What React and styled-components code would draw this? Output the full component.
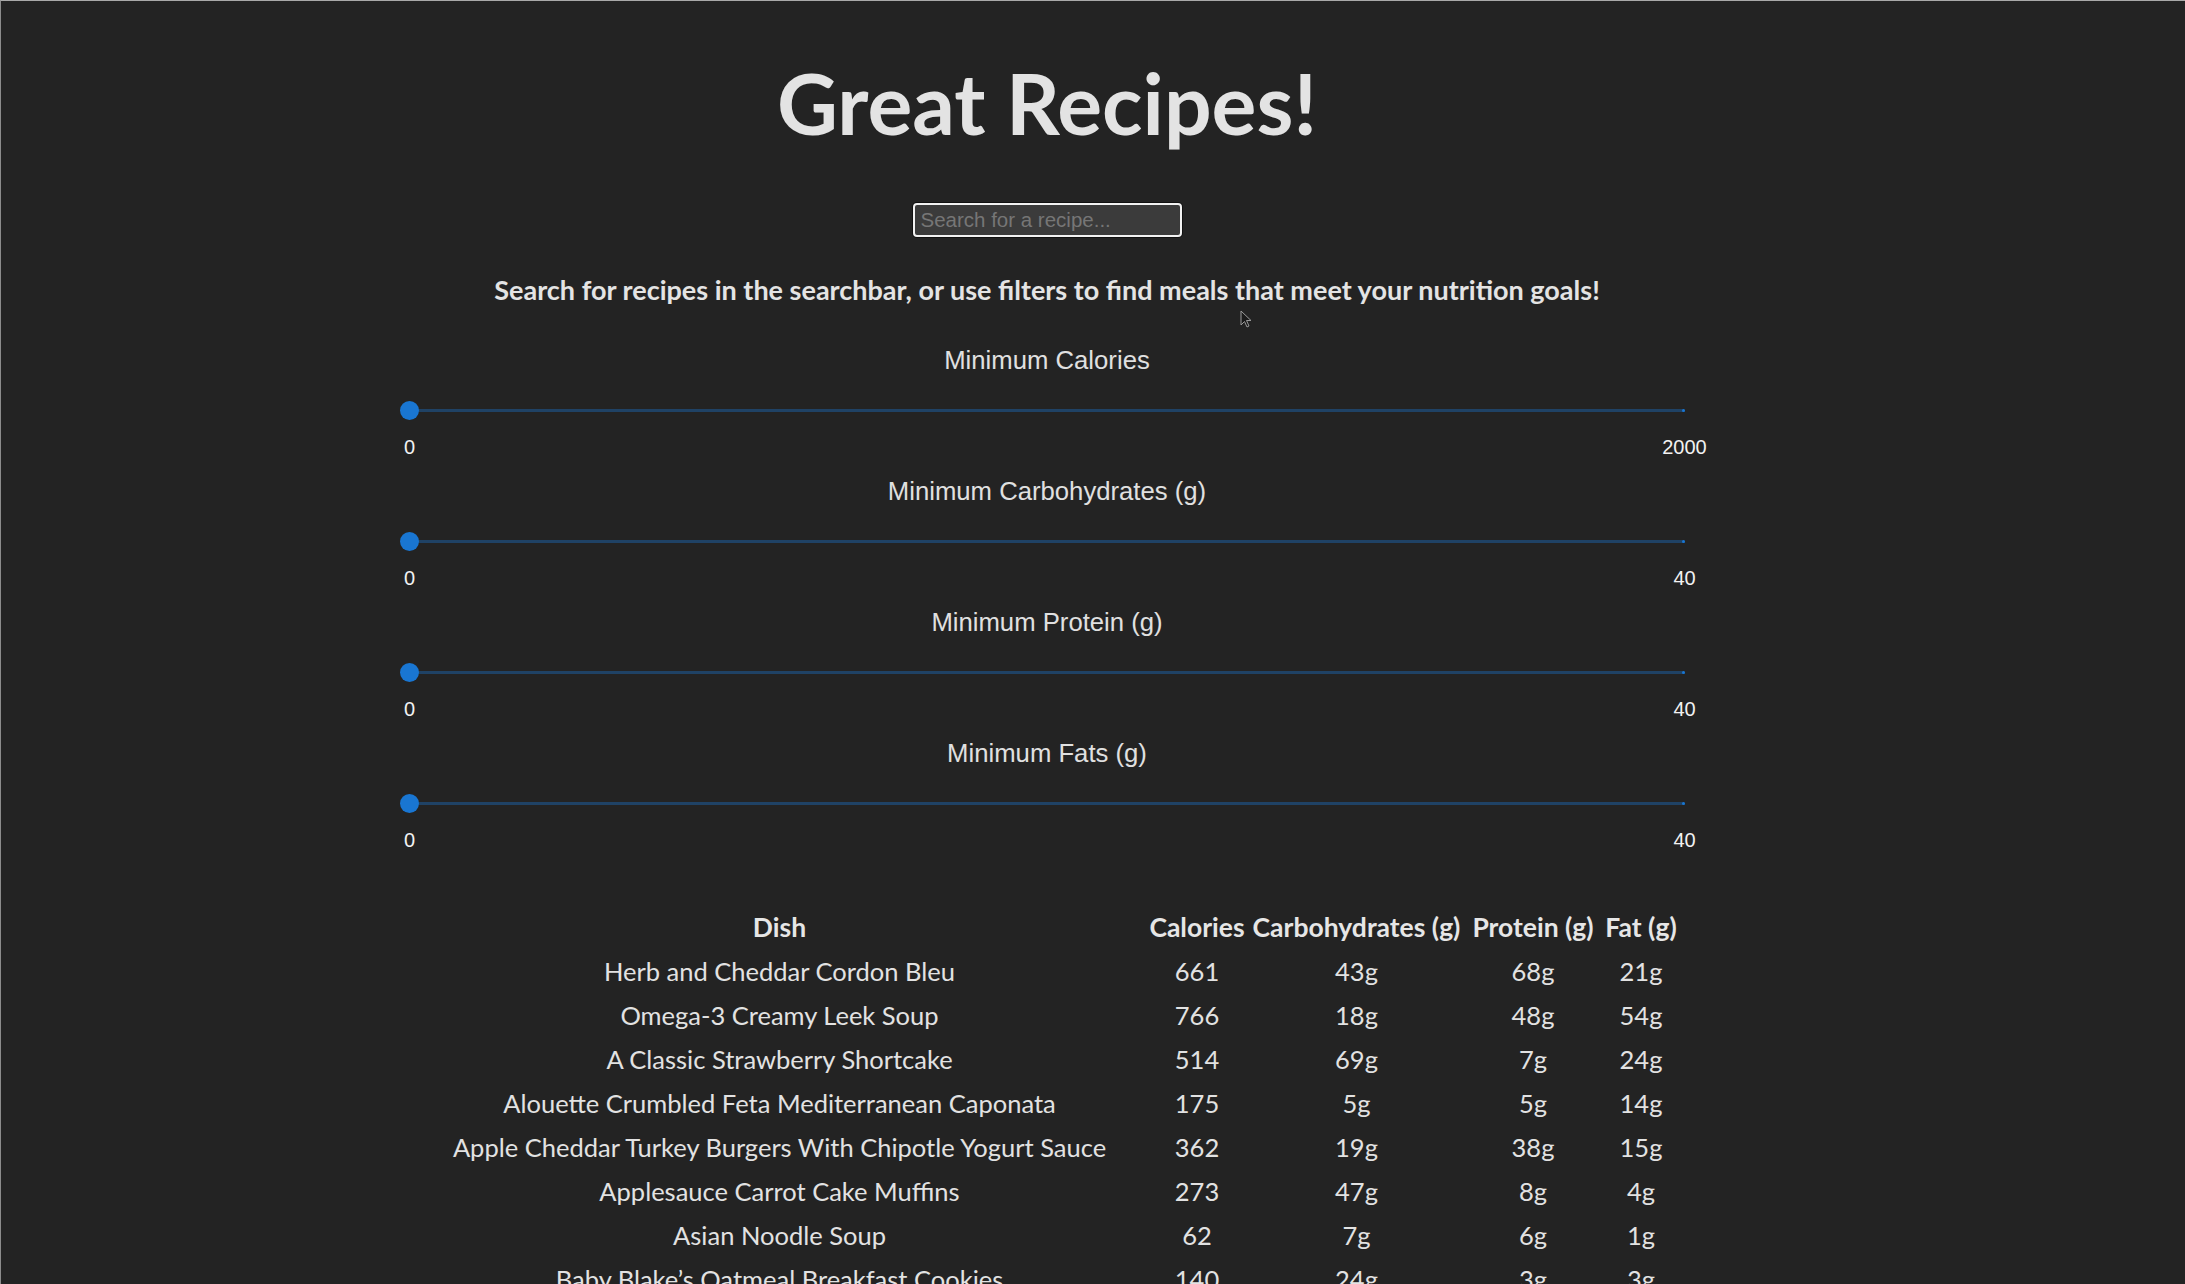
import React from "react";
import styled, { createGlobalStyle } from "styled-components";

const GlobalStyle = createGlobalStyle`
  html, body {
    margin: 0;
    padding: 0;
    background: #232323;
  }
  body {
    font-family: "Lato", "Open Sans", sans-serif;
    color: #e2e2e2;
  }
`;

const Page = styled.div`
  position: relative;
  box-sizing: border-box;
  width: 100%;
  min-height: 1284px;
  padding-right: 92px;
  border-top: 1px solid #a9a9a9;
  border-left: 1px solid #8c8c8c;
  display: flex;
  flex-direction: column;
  align-items: center;
`;

const Title = styled.h1`
  margin: 52px 0 0;
  font-family: "Lato", "Open Sans", sans-serif;
  font-weight: 700;
  font-size: 84px;
  line-height: 100px;
  color: #e3e3e3;
`;

const Search = styled.input`
  box-sizing: border-box;
  margin-top: 50px;
  width: 269px;
  height: 34px;
  padding: 0 6px;
  border: 2px solid #f2f2f2;
  border-radius: 4px;
  box-shadow: 0 0 0 1px #111;
  background: #3b3b3b;
  color: #ddd;
  font-family: "Liberation Sans", Arial, sans-serif;
  font-size: 20.5px;
  outline: none;
  &::placeholder {
    color: #767676;
  }
`;

const Subtitle = styled.h3`
  margin: 35px 0 0;
  font-family: "Lato", "Open Sans", sans-serif;
  font-weight: 700;
  font-size: 27px;
  line-height: 36px;
  color: #e4e4e4;
`;

const Filters = styled.div`
  margin-top: 37px;
  width: 1275px;
  display: flex;
  flex-direction: column;
`;

const Filter = styled.div`
  display: flex;
  flex-direction: column;
  & + & {
    margin-top: 17px;
  }
`;

const FilterLabel = styled.div`
  text-align: center;
  font-family: "Liberation Sans", Arial, sans-serif;
  font-size: 25.7px;
  line-height: 30px;
  color: #e0e0e0;
`;

const Rail = styled.div`
  position: relative;
  margin-top: 25px;
  height: 20px;
  display: flex;
  align-items: center;
  &::before {
    content: "";
    flex: 1;
    height: 3px;
    border-radius: 2px;
    background: #1976d2;
    opacity: 0.38;
  }
`;

const EndMark = styled.span`
  position: absolute;
  right: 0;
  top: 50%;
  width: 3px;
  height: 3px;
  margin-top: -1.5px;
  border-radius: 50%;
  background: #1976d2;
`;

const Thumb = styled.span`
  position: absolute;
  left: ${(p) => p.pos}%;
  top: 50%;
  width: 19px;
  height: 19px;
  margin: -9.5px 0 0 -9.5px;
  border-radius: 50%;
  background: #1976d2;
`;

const Marks = styled.div`
  margin-top: 15px;
  display: flex;
  justify-content: space-between;
`;

const Mark = styled.span`
  width: 0;
  display: flex;
  justify-content: center;
  white-space: nowrap;
  font-family: "Liberation Sans", Arial, sans-serif;
  font-size: 20px;
  line-height: 24px;
  color: #f2f2f2;
`;

const Table = styled.table`
  margin-top: 53px;
  width: 1270px;
  table-layout: fixed;
  border-collapse: collapse;
  font-family: "Lato", "Open Sans", sans-serif;
  font-size: 25.5px;
  color: #e2e2e2;
`;

const Th = styled.th`
  height: 44px;
  padding: 0;
  font-size: 26.5px;
  font-weight: 700;
  text-align: center;
  white-space: nowrap;
  color: #e6e6e6;
`;

const Td = styled.td`
  height: 44px;
  padding: 0;
  text-align: center;
  white-space: nowrap;
`;

const Pointer = styled.svg`
  position: absolute;
  left: 1239px;
  top: 309px;
  width: 12px;
  height: 18px;
  pointer-events: none;
`;

const filters = [
  { label: "Minimum Calories", max: 2000 },
  { label: "Minimum Carbohydrates (g)", max: 40 },
  { label: "Minimum Protein (g)", max: 40 },
  { label: "Minimum Fats (g)", max: 40 },
];

const recipes = [
  ["Herb and Cheddar Cordon Bleu", 661, "43g", "68g", "21g"],
  ["Omega-3 Creamy Leek Soup", 766, "18g", "48g", "54g"],
  ["A Classic Strawberry Shortcake", 514, "69g", "7g", "24g"],
  ["Alouette Crumbled Feta Mediterranean Caponata", 175, "5g", "5g", "14g"],
  ["Apple Cheddar Turkey Burgers With Chipotle Yogurt Sauce", 362, "19g", "38g", "15g"],
  ["Applesauce Carrot Cake Muffins", 273, "47g", "8g", "4g"],
  ["Asian Noodle Soup", 62, "7g", "6g", "1g"],
  ["Baby Blake\u2019s Oatmeal Breakfast Cookies", 140, "24g", "3g", "3g"],
];

function FilterSlider({ label, max, value }) {
  return (
    <Filter>
      <FilterLabel>{label}</FilterLabel>
      <Rail>
        <EndMark />
        <Thumb pos={(value / max) * 100} />
      </Rail>
      <Marks>
        <Mark>0</Mark>
        <Mark>{max}</Mark>
      </Marks>
    </Filter>
  );
}

export default function App() {
  return (
    <Page>
      <GlobalStyle />
      <Title>Great Recipes!</Title>
      <Search placeholder="Search for a recipe..." />
      <Subtitle>
        Search for recipes in the searchbar, or use filters to find meals that meet your nutrition goals!
      </Subtitle>
      <Filters>
        {filters.map((f) => (
          <FilterSlider key={f.label} label={f.label} max={f.max} value={0} />
        ))}
      </Filters>
      <Table>
        <colgroup>
          <col style={{ width: 735 }} />
          <col style={{ width: 100 }} />
          <col style={{ width: 219 }} />
          <col style={{ width: 134 }} />
          <col style={{ width: 82 }} />
        </colgroup>
        <thead>
          <tr>
            <Th>Dish</Th>
            <Th>Calories</Th>
            <Th>Carbohydrates (g)</Th>
            <Th>Protein (g)</Th>
            <Th>Fat (g)</Th>
          </tr>
        </thead>
        <tbody>
          {recipes.map((r) => (
            <tr key={r[0]}>
              {r.map((c, i) => (
                <Td key={i}>{c}</Td>
              ))}
            </tr>
          ))}
        </tbody>
      </Table>
      <Pointer viewBox="0 0 12 18">
        <path d="M1 1 L1 15 L4.5 11.5 L7 17 L9 16 L6.5 10.5 L11 10.5 Z" fill="#1a1a1a" stroke="#9a9a9a" strokeWidth="1" strokeLinejoin="round" />
      </Pointer>
    </Page>
  );
}
